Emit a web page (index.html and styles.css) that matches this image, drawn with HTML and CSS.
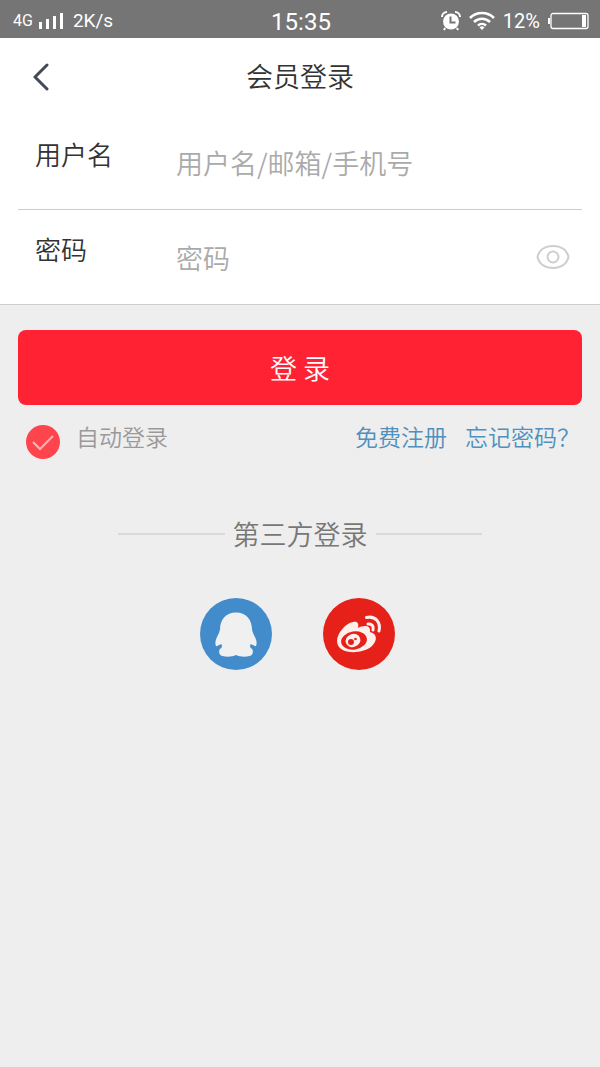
FILE: index.html
```html
<!DOCTYPE html>
<html lang="zh-CN">
<head>
<meta charset="utf-8">
<meta name="viewport" content="width=device-width, initial-scale=1">
<title>会员登录</title>
<link rel="stylesheet" href="styles.css">
</head>
<body>
<div class="status">
  <div class="status-left">
    <span class="network">4G</span>
    <svg class="signal" width="24" height="18" viewBox="0 0 24 18" fill="currentColor" aria-hidden="true"><path d="M0 10h3v7H0zM7 7h3v10H7zM14 4h3v13h-3zM21 1h3v16h-3z"/></svg>
    <span class="speed">2K/s</span>
  </div>
  <span class="clock">15:35</span>
  <div class="status-right">
    <svg width="20" height="20" viewBox="0 0 20 20" aria-hidden="true"><circle cx="10" cy="10.500" r="8" fill="#fff"/><path d="M1 6a5 5 0 0 1 5-5M14 1a5 5 0 0 1 5 5" fill="none" stroke="#fff" stroke-width="2"/><path d="M4 17l-1 2M16 17l1 2" stroke="#fff" stroke-width="2"/><path d="M9.500 5.500v6h5" fill="none" stroke="#757575" stroke-width="2"/></svg>
    <svg class="wifi" width="26" height="20" viewBox="0 0 26 20" fill="none" stroke="#fff" stroke-width="2.600" aria-hidden="true"><path d="M1 7a17 17 0 0 1 24 0M5 11a11.500 11.500 0 0 1 16 0M9 14.500a6 6 0 0 1 8 0"/><path d="M10.500 16.500a3.500 3.500 0 0 1 5 0L13 19z" fill="#fff" stroke="none"/></svg>
    <span class="percent">12%</span>
    <svg width="41" height="18" viewBox="0 0 41 18" aria-hidden="true"><rect x="3" y="1.500" width="37" height="15" rx="2" fill="none" stroke="#fff" stroke-width="1.300"/><path d="M34 3h4v12h-4zM0 6h2v6H0z" fill="#fff"/></svg>
  </div>
</div>
<form class="login">
  <div class="panel">
    <header class="header">
      <button class="back" type="button" aria-label="返回"><svg width="18" height="28" viewBox="0 0 18 28" fill="none" stroke="#434956" stroke-width="3" stroke-linecap="round" stroke-linejoin="round" aria-hidden="true"><path d="M15 2L3 14l12 12"/></svg></button>
      <h1 class="title">会员登录</h1>
    </header>
    <div class="field field-user">
      <label class="label" for="user">用户名</label>
      <input class="input" id="user" type="text" placeholder="用户名/邮箱/手机号">
    </div>
    <div class="field">
      <label class="label" for="password">密码</label>
      <input class="input" id="password" type="password" placeholder="密码">
      <button class="eye" type="button" aria-label="显示密码"><svg width="34" height="26" viewBox="0 0 34 26" fill="none" stroke="#cecece" stroke-width="2" aria-hidden="true"><path d="M1.500 13C3 6 9 2 17 2s14 4 15.500 11C31 20 25 24 17 24S3 20 1.500 13z"/><circle cx="17" cy="13" r="5.500"/></svg></button>
    </div>
  </div>
  <div class="actions">
    <button class="submit" type="submit">登 录</button>
    <div class="options">
      <input class="check" id="auto" type="checkbox" checked>
      <label class="auto" for="auto">自动登录</label>
      <a class="link" href="#register">免费注册</a>
      <a class="link" href="#forgot">忘记密码？</a>
    </div>
  </div>
</form>
<section class="third">
  <h2 class="divider">第三方登录</h2>
  <div class="socials">
    <a class="social" href="#qq" aria-label="QQ"><svg width="72" height="72" viewBox="0 0 72 72" aria-hidden="true"><circle cx="36" cy="36" r="36" fill="#438ccb"/><path d="M36 14.500c-10 0-16 7-16 17-.5 4-4 8-4.500 12-.3 4 .5 6 2.500 4l3.500-1.500.5 3-2.500 2.500c-1 3 0 5.500 3 6.500 5 1.500 10 .5 13.500-1 3.500 1.500 8.500 2.500 13.500 1 3-1 4-3.500 3-6.500l-2.500-2.500.5-3 3.500 1.500c2 2 2.800 0 2.500-4-.5-4-4-8-4.500-12 0-10-6-17-16-17z" fill="#f0f0f0"/></svg></a>
    <a class="social" href="#weibo" aria-label="微博"><svg width="72" height="72" viewBox="0 0 72 72" aria-hidden="true"><circle cx="36" cy="36" r="36" fill="#e62119"/><path d="M14 43c0-8 9-18 16-19 5-1 6 2 5 6 6-3 13-3 12 4 8 2 7 9 2 14-10 9-35 9-35-5z" fill="#fff0ee"/><ellipse cx="31" cy="42.500" rx="13" ry="9" transform="rotate(-9 31 42.500)" fill="#e62119"/><ellipse cx="30" cy="42.500" rx="7.500" ry="6.500" transform="rotate(-20 30 42.500)" fill="#fff0ee"/><circle cx="28" cy="44" r="3" fill="#e62119"/><circle cx="32.500" cy="41" r="1.300" fill="#e62119"/><path d="M43.500 19.500c9-2 14.500 5 12.500 13.500M45 26c4-.5 6 2.500 5 6" fill="none" stroke="#fff0ee" stroke-width="3" stroke-linecap="round"/></svg></a>
  </div>
</section>
</body>
</html>
```
FILE: styles.css
```css
* { box-sizing: border-box; }

body {
  margin: 0;
  min-height: 100vh;
  background: #eee;
  color: #333;
  font-family: "Noto Sans CJK SC", sans-serif;
  font-size: 27px;
  font-weight: 350;
  line-height: 40px;
}

button, input { font: inherit; }

button {
  padding: 0;
  border: 0;
  background: none;
  cursor: pointer;
}

svg { display: block; }

.status {
  display: grid;
  grid-template-columns: 1fr auto 1fr;
  align-items: center;
  height: 38px;
  padding: 0 11px 0 13px;
  background: #757575;
  color: #fff;
  font-family: Roboto, sans-serif;
  font-weight: 400;
}

.status-left, .status-right {
  display: flex;
  align-items: center;
}

.status-left { gap: 6px; }
.status-right { justify-content: flex-end; gap: 8px; }
.network { font-size: 16px; }
.speed { margin-left: 4px; font-size: 19px; }
.clock { padding-top: 2px; font-size: 24px; }
.percent { font-size: 20px; }

.panel {
  background: #fff;
  border-bottom: 1px solid #ccc;
}

.header {
  display: grid;
  grid-template-columns: 64px 1fr 64px;
  align-items: center;
  height: 77px;
}

.back {
  display: flex;
  justify-content: flex-end;
  padding-right: 14px;
}

.title {
  margin: 0;
  padding-bottom: 2px;
  font-size: 27px;
  font-weight: 350;
  text-align: center;
}

.field {
  display: flex;
  align-items: center;
  height: 94px;
  margin: 0 18px;
  padding: 0 12px 0 17px;
}

.field-user {
  height: 95px;
  border-bottom: 1px solid #ccc;
}

.label {
  width: 141px;
  padding-bottom: 16px;
  font-size: 26px;
}

.input {
  flex: 1;
  min-width: 0;
  height: 48px;
  padding: 0;
  border: 0;
  outline: 0;
  background: none;
  color: #333;
}

.input::placeholder { color: #aaa; }

.actions { padding: 25px 18px 0; }

.submit {
  width: 100%;
  height: 75px;
  border-radius: 8px;
  background: #ff2233;
  color: #fff;
}

.options {
  display: flex;
  gap: 18px;
  padding: 16px 2px 0 8px;
  font-size: 23px;
  line-height: 30px;
}

.check {
  appearance: none;
  width: 34px;
  height: 34px;
  margin: 4px 0 0;
  border-radius: 50%;
  background: #ddd;
}

.check:checked {
  background: #fe454e url("data:image/svg+xml,%3Csvg xmlns='http://www.w3.org/2000/svg' viewBox='0 0 34 34'%3E%3Cpath d='M7 17l7 7 13-13' fill='none' stroke='%23ffb3b5' stroke-width='2'/%3E%3C/svg%3E") center / cover;
}

.auto {
  flex: 1;
  margin-left: -2px;
  color: #999;
}

.link {
  color: #5090bd;
  text-decoration: none;
}

.third { padding-top: 55px; }

.divider {
  display: flex;
  align-items: center;
  gap: 8px;
  margin: 0 118px;
  color: #777;
  font-size: 27px;
  font-weight: 350;
}

.divider::before, .divider::after {
  content: "";
  flex: 1;
  height: 2px;
  background: #dadada;
}

.socials {
  display: flex;
  justify-content: center;
  gap: 51px;
  padding: 44px 5px 0 0;
}
```
